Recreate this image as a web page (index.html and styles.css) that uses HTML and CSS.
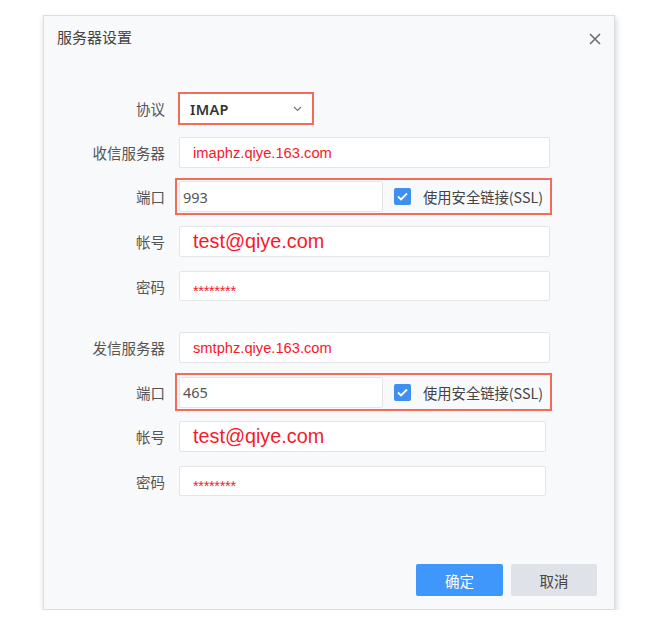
FILE: index.html
```html
<!DOCTYPE html>
<html lang="zh">
<head>
<meta charset="utf-8">
<title>服务器设置</title>
<link rel="stylesheet" href="styles.css">
</head>
<body>
<div class="dialog">
  <div class="header">
    <span class="title">服务器设置</span>
    <svg class="close" width="12" height="12" viewBox="0 0 12 12"><path d="M1 1L11 11M11 1L1 11" stroke="#6b6e73" stroke-width="1.6" fill="none"/></svg>
  </div>
  <div class="form">
    <div class="row r-proto">
      <label class="lbl">协议</label>
      <div class="select">
        <span class="sel-text">IMAP</span>
        <svg class="chev" width="9" height="6" viewBox="0 0 9 6"><path d="M1 1L4.5 4.5L8 1" stroke="#777" stroke-width="1.2" fill="none"/></svg>
      </div>
    </div>
    <div class="row r-in">
      <label class="lbl">收信服务器</label>
      <div class="input w371 red">imaphz.qiye.163.com</div>
    </div>
    <div class="row r-port1">
      <label class="lbl">端口</label>
      <div class="portbox">
        <div class="input port grey">993</div>
        <span class="check"><svg width="11" height="9" viewBox="0 0 11 9"><path d="M1 4.5L4 7.5L10 1.5" stroke="#fff" stroke-width="1.8" fill="none"/></svg></span>
        <span class="ssl">使用安全链接(SSL)</span>
      </div>
    </div>
    <div class="row r-acct1">
      <label class="lbl">帐号</label>
      <div class="input w371 red big">test@qiye.com</div>
    </div>
    <div class="row r-pw1">
      <label class="lbl">密码</label>
      <div class="input w371 red stars">********</div>
    </div>
    <div class="row r-out">
      <label class="lbl">发信服务器</label>
      <div class="input w371 red">smtphz.qiye.163.com</div>
    </div>
    <div class="row r-port2">
      <label class="lbl">端口</label>
      <div class="portbox tall">
        <div class="input port grey">465</div>
        <span class="check"><svg width="11" height="9" viewBox="0 0 11 9"><path d="M1 4.5L4 7.5L10 1.5" stroke="#fff" stroke-width="1.8" fill="none"/></svg></span>
        <span class="ssl">使用安全链接(SSL)</span>
      </div>
    </div>
    <div class="row r-acct2">
      <label class="lbl">帐号</label>
      <div class="input w367 red big">test@qiye.com</div>
    </div>
    <div class="row r-pw2">
      <label class="lbl">密码</label>
      <div class="input w367 red stars">********</div>
    </div>
  </div>
  <div class="footer">
    <button class="btn primary">确定</button>
    <button class="btn cancel">取消</button>
  </div>
</div>
</body>
</html>
```
FILE: styles.css
```css
html, body {
  margin: 0;
  padding: 0;
  background: #fff;
}
body {
  font-family: "Noto Sans CJK SC", "Noto Sans", sans-serif;
  padding: 15px 0 0 43px;
}
.dialog {
  width: 570px;
  height: 593px;
  background: #f8f9fb;
  border: 1px solid #dcdde0;
  box-shadow: 1px 3px 6px rgba(0, 0, 0, 0.18);
  display: flex;
  flex-direction: column;
}
.header {
  display: flex;
  justify-content: space-between;
  align-items: flex-start;
  padding: 11px 13px 0 13px;
  height: 65px;
}
.title {
  font-size: 15px;
  line-height: 20px;
  color: #444;
}
.close {
  margin-top: 6px;
}
.form {
  display: flex;
  flex-direction: column;
}
.row {
  display: flex;
  align-items: center;
}
.lbl {
  width: 121px;
  text-align: right;
  font-size: 14.5px;
  color: #555;
  margin-right: 14px;
  flex: none;
}
.r-proto { height: 33px; }
.r-proto .lbl { margin-right: 13px; }
.r-in { margin-top: 12px; height: 31px; }
.r-port1 { margin-top: 10px; height: 37px; }
.r-port1 .lbl, .r-port2 .lbl { margin-right: 10px; }
.r-acct1 { margin-top: 11px; height: 31px; }
.r-pw1 { margin-top: 14px; height: 30px; }
.r-out { margin-top: 31px; height: 31px; }
.r-port2 { margin-top: 10px; height: 38px; }
.r-acct2 { margin-top: 10px; height: 31px; }
.r-pw2 { margin-top: 14px; height: 30px; }

.select {
  box-sizing: border-box;
  width: 136px;
  height: 33px;
  border: 2px solid #f36c5a;
  background: #fff;
  display: flex;
  align-items: center;
  justify-content: space-between;
  padding: 0 10px 0 10px;
}
.sel-text {
  font-family: "Noto Sans", "Open Sans", sans-serif;
  font-size: 14.5px;
  font-weight: 600;
  color: #333;
  letter-spacing: 0.3px;
}
.input {
  box-sizing: border-box;
  height: 100%;
  background: #fff;
  border: 1px solid #e3e5e9;
  border-radius: 2px;
  display: flex;
  align-items: center;
  padding-left: 13px;
  font-family: "Liberation Sans", Arial, sans-serif;
  font-size: 14.7px;
}
.w371 { width: 371px; }
.w367 { width: 367px; }
.red { color: #f7192a; }
.big { font-size: 19.8px; }
.stars { font-size: 14.5px; padding-top: 9px; letter-spacing: -0.3px; }
.grey {
  color: #555;
  font-family: "Noto Sans", "Open Sans", sans-serif;
  font-size: 14.5px;
  padding-left: 3px;
}
.portbox {
  box-sizing: border-box;
  width: 377px;
  height: 37px;
  border: 2px solid #f36c5a;
  padding: 1px 2px;
  display: flex;
  align-items: center;
}
.portbox.tall { height: 38px; }
.port {
  width: 204px;
  height: 31px;
}
.check {
  width: 17px;
  height: 17px;
  border-radius: 2px;
  background: #3e8ff0;
  margin-left: 11px;
  display: flex;
  align-items: center;
  justify-content: center;
}
.ssl {
  margin-left: 12px;
  font-size: 14.3px;
  color: #444;
  white-space: nowrap;
}
.footer {
  margin-top: auto;
  display: flex;
  justify-content: flex-end;
  gap: 8px;
  padding: 0 17px 13px 0;
}
.btn {
  height: 32px;
  border: none;
  border-radius: 2px;
  font-family: "Noto Sans CJK SC", sans-serif;
  font-size: 14.5px;
  padding: 0;
}
.primary {
  width: 87px;
  background: #3f97fb;
  color: #fff;
}
.cancel {
  width: 86px;
  background: #dfe2e8;
  color: #444;
}
```
